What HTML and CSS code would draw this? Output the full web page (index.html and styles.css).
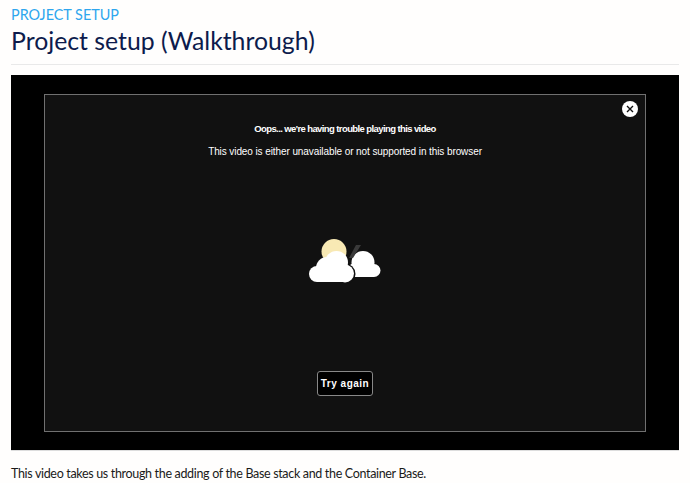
FILE: index.html
```html
<!DOCTYPE html>
<html lang="en">
<head>
<meta charset="utf-8">
<title>Project setup (Walkthrough)</title>
<link rel="stylesheet" href="styles.css">
</head>
<body>
<main class="page">
  <header class="head">
    <div class="eyebrow">PROJECT SETUP</div>
    <h1 class="title">Project setup (Walkthrough)</h1>
  </header>
  <section class="player">
    <div class="panel">
      <button class="close" aria-label="Close">
        <svg width="8" height="8" viewBox="0 0 8 8"><path d="M1 1L7 7M7 1L1 7" stroke="#111" stroke-width="1.4" fill="none"/></svg>
      </button>
      <p class="oops">Oops... we're having trouble playing this video</p>
      <p class="msg">This video is either unavailable or not supported in this browser</p>
      <svg class="art" width="74" height="46" viewBox="0 0 74 46">
        <g fill="#fff">
          <circle cx="55" cy="24.500" r="11.500"/>
          <circle cx="66" cy="32.500" r="6.500"/>
          <circle cx="47" cy="32" r="7"/>
          <rect x="44" y="28" width="22" height="11"/>
        </g>
        <circle cx="37" cy="36" r="10.500" fill="#111"/>
        <path d="M41 20L48 7L53 7L45 20Z" fill="#3a3a3a"/>
        <circle cx="26" cy="13.500" r="12.500" fill="#f8e9b4"/>
        <g fill="#fff">
          <circle cx="9" cy="36" r="8"/>
          <circle cx="19" cy="30" r="11"/>
          <circle cx="28.500" cy="24.500" r="11.500"/>
          <circle cx="37" cy="35.500" r="9"/>
          <rect x="9" y="30" width="28" height="14"/>
        </g>
      </svg>
      <button class="retry">Try again</button>
    </div>
  </section>
  <p class="caption">This video takes us through the adding of the Base stack and the Container Base.</p>
</main>
</body>
</html>
```
FILE: styles.css
```css
* { box-sizing: border-box; }
html, body { margin: 0; height: 100%; }
body {
  background: #fffefd;
  font-family: "Lato", "Open Sans", sans-serif;
  overflow: hidden;
}
.page { padding: 7px 11px 0; }
.head {
  border-bottom: 1px solid #e9e9e9;
  height: 58px;
  margin-bottom: 10px;
}
.eyebrow {
  color: #2ea6ee;
  font-size: 14.400px;
  line-height: 16px;
}
.title {
  color: #0d1b4c;
  font-size: 24.800px;
  font-weight: 400;
  line-height: 32px;
  margin: 2px 0 0;
}
.player {
  background: #000;
  height: 376px;
  padding: 19px 33px 18px;
  border-bottom: 1px solid #ddd;
}
.panel {
  position: relative;
  height: 338px;
  background: #111;
  border: 1px solid #707070;
  display: flex;
  flex-direction: column;
  align-items: center;
  color: #fff;
  font-family: "Liberation Sans", Arial, sans-serif;
}
.close {
  position: absolute;
  top: 6px;
  right: 7px;
  width: 16px;
  height: 16px;
  padding: 0;
  border: 0;
  border-radius: 50%;
  background: #fff;
  display: flex;
  align-items: center;
  justify-content: center;
}
.oops {
  margin: 28px 0 0;
  font-size: 9.500px;
  font-weight: 700;
  letter-spacing: -0.6px;
  line-height: 12px;
}
.msg {
  margin: 11px 0 0;
  font-size: 10px;
  letter-spacing: -0.09px;
  line-height: 12px;
}
.art { margin: 80px 0 0; }
.retry {
  margin-top: 87px;
  width: 56px;
  height: 25px;
  padding: 0;
  background: #000;
  color: #fff;
  border: 1px solid #888;
  border-radius: 3px;
  font-family: "Liberation Sans", Arial, sans-serif;
  font-size: 10px;
  font-weight: 700;
  letter-spacing: 0.5px;
}
.caption {
  margin: 14px 0 0;
  color: #1a1a1a;
  font-size: 12.500px;
  letter-spacing: -0.33px;
  line-height: 18px;
}
```
